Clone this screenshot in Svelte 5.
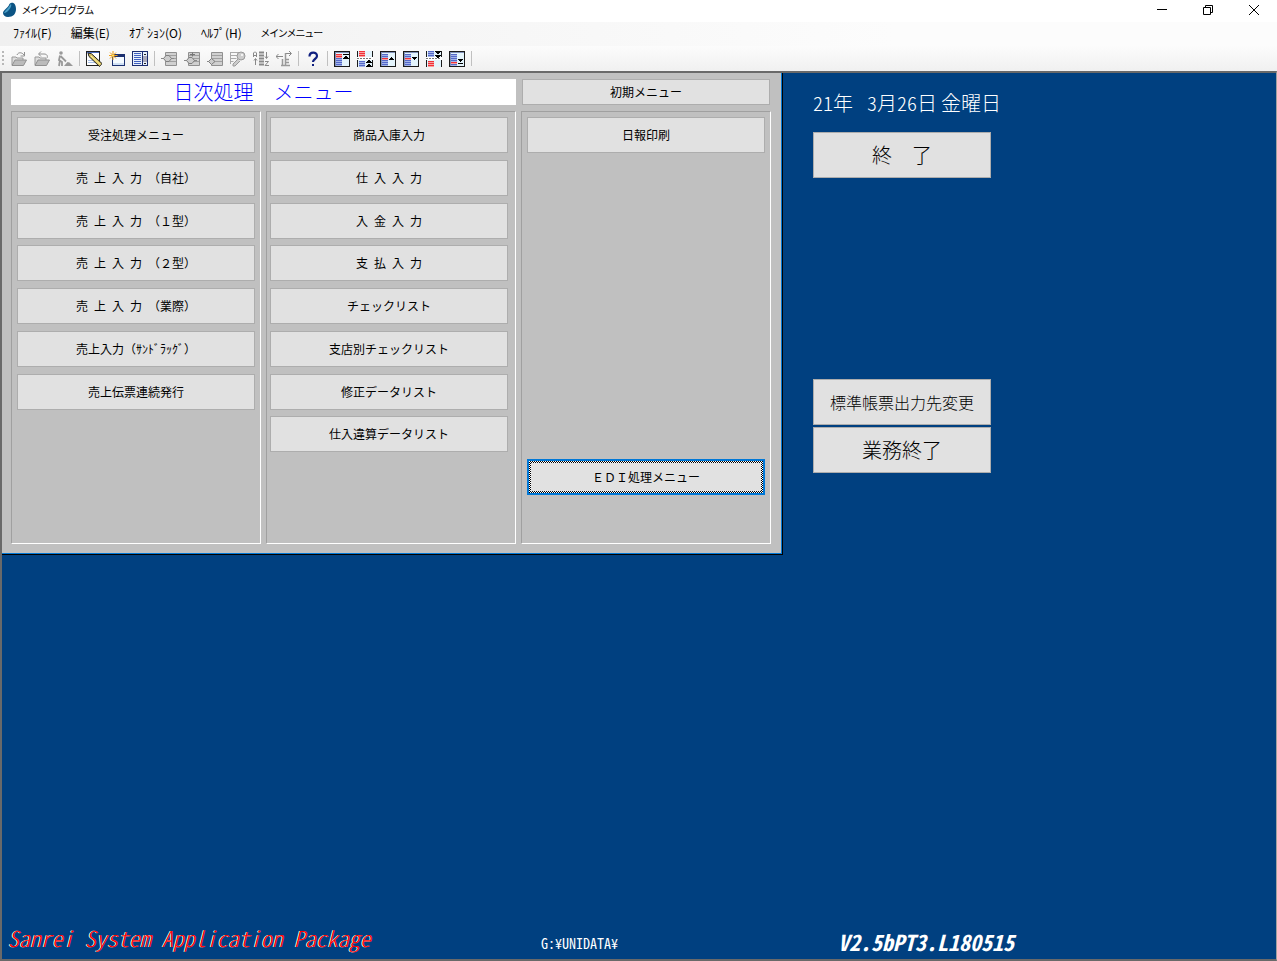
<script>
    const menus = ['ﾌｧｲﾙ(F)', '編集(E)', 'ｵﾌﾟｼｮﾝ(O)', 'ﾍﾙﾌﾟ(H)', 'メインメニュー'];

    const toolGroups = [
        ['open', 'revert', 'dig'],
        ['edit', 'new', 'list'],
        ['first', 'second', 'third', 'key', 'sort', 'range'],
        ['help'],
        ['pageTop', 'pagePrev', 'rowUp', 'rowDown', 'pageNext', 'pageEnd']
    ];

    // null keeps the row empty, \u2002 is a half-width space
    const columns = [
        [
            '受注処理メニュー',
            '売\u2002上\u2002入\u2002力\u2002（自社）',
            '売\u2002上\u2002入\u2002力\u2002（１型）',
            '売\u2002上\u2002入\u2002力\u2002（２型）',
            '売\u2002上\u2002入\u2002力\u2002（業際）',
            '売上入力（ｻﾝﾄﾞﾗｯｸﾞ）',
            '売上伝票連続発行'
        ],
        [
            '商品入庫入力',
            '仕\u2002入\u2002入\u2002力',
            '入\u2002金\u2002入\u2002力',
            '支\u2002払\u2002入\u2002力',
            'チェックリスト',
            '支店別チェックリスト',
            '修正データリスト',
            '仕入違算データリスト'
        ],
        ['日報印刷', null, null, null, null, null, null, null, 'ＥＤＩ処理メニュー']
    ];

    let selected = $state('ＥＤＩ処理メニュー');
</script>

{#snippet lines(red, ys)}
    {#each ys as y}
        <path d="M2 {y}h6v1h-6z" fill={red.includes(y) ? '#f03038' : '#5468c8'} />
        <path d="M2 {y + 1}h6v1h-6z" fill={red.includes(y) ? '#f8a0a0' : '#a4b4e8'} />
    {/each}
{/snippet}

{#snippet frame()}
    <path d="M0 0h16v16H0z" fill="#1a1a1a" />
    <path d="M1 1h14v14H1z" fill="#e4f4fc" />
    <path d="M1 1h14v1H1zM1 1h1v14H1z" fill="#8090b8" />
{/snippet}

{#snippet split()}
    <path d="M0 0h16v16H0z" fill="#e4f4fc" />
    <path d="M0 0h1v6H0zM15 0h1v6h-1zM0 9h1v7H0zM15 9h1v7h-1z" fill="#1a1a1a" />
    <path d="M0 6h16v3H0z" fill="#fff" />
    <path d="M0 7h2v1H0zM3 7h2v1H3zM6 7h2v1H6zM9 7h2v1H9zM12 7h2v1h-2z" fill="#777" />
{/snippet}

{#snippet icon(name)}
    <svg width="16" height="16" viewBox="0 0 16 16" aria-hidden="true">
        {#if name === 'open' || name === 'revert'}
            <path d="M1 14V6h4l1 1h6v2" fill="#ddd" stroke="#999" />
            <path d="M1 14.5 4 9h11.5l-3 5.5z" fill="#bbb" stroke="#909090" />
            {#if name === 'open'}
                <path d="M6 4c1-3 5-3 7 0M13.500 1v4h-4" fill="none" stroke="#909090" />
            {:else}
                <path d="M5 3h5c3 0 4 2 3 4M7 .5 4.500 3 7 5.500" fill="none" stroke="#909090" />
            {/if}
        {:else if name === 'dig'}
            <circle cx="4" cy="2" r="1.800" fill="#999" />
            <path d="M3 4.500 2 9l3 2v4M3 9l-1 6M3.500 5 9 10.500" fill="none" stroke="#999" stroke-width="1.800" />
            <path d="m7 15 3.500-4 2 .5L16 15z" fill="#999" />
        {:else if name === 'edit'}
            <path d="M0 0h14v15H0z" fill="#222" />
            <path d="M1 1h12v13H1z" fill="#fff" />
            <path d="M1 1h12v1H1z" fill="#5070c0" />
            <path d="M2 11h7v1H2zM2 9h5v1H2z" fill="#a8c0e8" />
            <path d="m2 2 3.500.8L16 12.500 13.500 15.500 3 5.500z" fill="#d8c060" stroke="#222" />
            <path d="m5 5 9.500 8.700" stroke="#fff5a0" fill="none" />
        {:else if name === 'new'}
            <path d="M3 3h13v12H3z" fill="#1c3070" />
            <path d="M4 6h11v8H4z" fill="#f4faff" />
            <path d="M4 12h11v2H4z" fill="#cfe0f4" />
            <path d="M4 0v9M0 4.500h8.500M1 1.500l6 6M7 1.500l-6 6" stroke="#f0a018" fill="none" />
            <path d="M3 3.500h2v2H3z" fill="#ffe060" />
        {:else if name === 'list'}
            <path d="M0 0h16v15H0z" fill="#1c2c70" />
            <path d="M1 1h9v13H1zM11 1h4v13h-4z" fill="#e8f0fc" />
            <path d="M2 2h7v1H2zM2 4h7v1H2zM2 6h7v1H2zM2 8h7v1H2zM2 10h7v1H2zM2 12h7v1H2z" fill="#4060c0" />
            <path d="M11 5h4v6h-4z" fill="#aab" />
            <path d="M12 3h2v1h-2zM12 12h2v1h-2z" fill="#222" />
        {:else if name === 'first' || name === 'second' || name === 'third'}
            <path d="M4.500 1.500h11v13h-11z" fill="#d0d0d0" stroke="#909090" />
            <path d="M5 4.500h10M5 7.500h10M5 10.500h10" stroke="#a0a0a0" fill="none" />
            {#if name === 'first'}
                <path d="M0 7.500h13" stroke="#888" fill="none" />
                <path d="M2.500 7.500 5 4.500h3l2.500 3-2.500 3H5z" fill="#ccc" stroke="#808080" />
            {:else if name === 'second'}
                <path d="M6 3.500h5M8.500 1.500v4" stroke="#777" fill="none" />
                <path d="M0 9.500h13" stroke="#888" fill="none" />
                <path d="M2.500 9.500 5 6.500h3l2.500 3-2.500 3H5z" fill="#ccc" stroke="#808080" />
            {:else}
                <path d="M0 10.500h8" stroke="#888" fill="none" />
                <path d="m1.500 10.500 3-3 3.500 3-3.500 3z" fill="#ccc" stroke="#808080" />
            {/if}
        {:else if name === 'key'}
            <path d="M.5 1.500h9M.5 4.500h7M.5 7.500h6M.5 10.500h3M.5 1v12" stroke="#aaa" fill="none" />
            <circle cx="11" cy="5" r="4" fill="#ccc" stroke="#999" />
            <circle cx="12" cy="4" r="1" fill="#fff" />
            <path d="m8 8-5 5v2h2l5-5" fill="#ccc" stroke="#999" />
        {:else if name === 'sort'}
            <path d="M.5 6V2l1-1h1l1 1v4M.5 4.500h3" stroke="#888" fill="none" />
            <path d="M6 1.500h5M6 4.500h5M6 7.500h5M6 10.500h5M6 13.500h5" stroke="#888" stroke-width="2" fill="none" />
            <path d="M13.500 1v6M12 5.500l1.500 2 1.500-2M12 10.500h3.500l-3.500 4h4M2.500 14V8M1 9.500l1.500-2L4 9.500" stroke="#888" fill="none" />
        {:else if name === 'range'}
            <path d="M0 5.500h7M2.500 3 0 5.500 2.500 8M9 2.500h6M13 0l2.500 2.500L13 5" stroke="#888" fill="none" />
            <path d="M9.500 2v12M5 14.500h9M6.500 8v6M9 8.500h4M9 11.500h4" stroke="#999" fill="none" stroke-width="1.500" />
        {:else if name === 'help'}
            <path d="M4.500 5.500C4.500.500 12 .500 12 5c0 3-4 3-4 6" stroke="#102080" stroke-width="2.200" fill="none" />
            <path d="M7 13h2v2H7z" fill="#102080" />
        {:else if name === 'pageTop'}
            {@render frame()}
            {@render lines([3, 5], [3, 5, 7, 9, 11, 13])}
            <path d="M9 3h6v1H9zM11 5h2v1h-2zM10 6h4v1h-4zM9 7h6v1H9z" />
        {:else if name === 'pagePrev'}
            {@render split()}
            {@render lines([0, 2, 4], [0, 2, 4, 10, 12, 14])}
            <path d="M11 9h2v1h-2zM10 10h4v1h-4zM9 11h6v1H9zM11 13h2v1h-2zM10 14h4v1h-4zM9 15h6v1H9z" />
        {:else if name === 'rowUp'}
            {@render frame()}
            {@render lines([7], [3, 5, 7, 9, 11, 13])}
            <path d="M11 6h1v1h-1zM10 7h3v1h-3zM9 8h5v1H9z" />
        {:else if name === 'rowDown'}
            {@render frame()}
            {@render lines([7], [3, 5, 7, 9, 11, 13])}
            <path d="M9 6h5v1H9zM10 7h3v1h-3zM11 8h1v1h-1z" />
        {:else if name === 'pageNext'}
            {@render split()}
            {@render lines([10, 12, 14], [0, 2, 4, 10, 12, 14])}
            <path d="M9 0h6v1H9zM10 1h4v1h-4zM11 2h2v1h-2zM9 4h6v1H9zM10 5h4v1h-4zM11 6h2v1h-2z" />
        {:else}
            {@render frame()}
            {@render lines([11], [3, 5, 7, 9, 11, 13])}
            <path d="M9 8h5v1H9zM10 9h3v1h-3zM11 10h1v1h-1zM9 12h5v1H9z" />
        {/if}
    </svg>
{/snippet}

<div class="window">
    <header class="titlebar">
        <svg width="16" height="16" viewBox="0 0 16 16" aria-hidden="true">
            <path d="M9 1c3-1 5 2 5 6 0 5-3 8-8 8-3 0-5-2-5-4 0-3 5-5 6-8 .3-1 1-1.700 2-2z" fill="#0c5484" />
            <path d="M9 2c1 2-1 5-3 7-1.500 1.500-3 2-4 2 1-3 5-5 6-8z" fill="#4aa0c8" />
        </svg>
        <h1>メインプログラム</h1>
        <div class="window-controls">
            <button aria-label="最小化">
                <svg width="12" height="12" viewBox="0 0 12 12"><path d="M1 5.500h10" /></svg>
            </button>
            <button aria-label="元に戻す">
                <svg width="12" height="12" viewBox="0 0 12 12"><path d="M1.500 3.500h7v7h-7zM3.500 3V1.500h7v7H9" /></svg>
            </button>
            <button aria-label="閉じる">
                <svg width="12" height="12" viewBox="0 0 12 12"><path d="m1 1 10 10M11 1 1 11" /></svg>
            </button>
        </div>
    </header>

    <nav class="menubar">
        {#each menus as menu}
            <button>{menu}</button>
        {/each}
    </nav>

    <div class="toolbar">
        <span class="grip"></span>
        {#each toolGroups as group}
            <div class="tool-group">
                {#each group as name}
                    <button aria-label={name}>{@render icon(name)}</button>
                {/each}
            </div>
        {/each}
    </div>

    <main class="stage">
        <div class="top">
            <section class="panel">
                <h2 class="panel-title">日次処理　メニュー</h2>
                <button class="btn initial">初期メニュー</button>
                {#each columns as items}
                    <div class="column">
                        {#each items as item}
                            {#if item}
                                <button class="btn" class:focused={item === selected} onclick={() => (selected = item)}>{item}</button>
                            {:else}
                                <span></span>
                            {/if}
                        {/each}
                    </div>
                {/each}
            </section>

            <aside class="side">
                <p class="date">
                    <span>21年</span>
                    <span>{' 3月26日'}</span>
                    <span>金曜日</span>
                </p>
                <button class="btn large">終　了</button>
                <div class="side-bottom">
                    <button class="btn medium">標準帳票出力先変更</button>
                    <button class="btn large">業務終了</button>
                </div>
            </aside>
        </div>

        <footer class="footer">
            <span class="product">Sanrei System Application Package</span>
            <span class="path">G:¥UNIDATA¥</span>
            <span class="version">V2.5bPT3.L180515</span>
        </footer>
    </main>
</div>

<style>
    :global(body) {
        margin: 0;
    }

    * {
        box-sizing: border-box;
    }

    h1, h2, p {
        margin: 0;
        font-weight: 400;
    }

    button {
        font: inherit;
        color: inherit;
        padding: 0;
        border: none;
        background: none;
    }

    svg {
        display: block;
    }

    .window {
        display: flex;
        flex-direction: column;
        min-height: 100vh;
        font-family: "Noto Sans CJK JP", sans-serif;
        font-size: 12px;
        line-height: 16px;
        color: #000;
        background: #fff;
    }

    .titlebar {
        display: flex;
        align-items: center;
        height: 22px;
        padding: 0 0 2px 2px;
        gap: 4px;
    }

    .titlebar h1 {
        font-size: 10px;
        font-feature-settings: "palt";
    }

    .window-controls {
        display: flex;
        margin-left: auto;
    }

    .window-controls button {
        display: flex;
        justify-content: center;
        align-items: center;
        width: 46px;
        height: 18px;
    }

    .window-controls path {
        fill: none;
        stroke: #000;
    }

    .menubar {
        display: flex;
        align-items: center;
        height: 24px;
        padding: 0 0 2px 13px;
        gap: 19px;
        background: linear-gradient(to right, #f0f0f0, #fcfcfc 70%);
        font-feature-settings: "palt";
    }

    .menubar button:last-child {
        font-size: 10px;
    }

    .toolbar {
        display: flex;
        align-items: center;
        height: 25px;
        padding-left: 2px;
        background: linear-gradient(#fcfcfc, #f0f0f0);
    }

    .grip {
        width: 2px;
        height: 15px;
        margin-right: 3px;
        background: repeating-linear-gradient(#b8b8b8 0 2px, transparent 2px 4px);
    }

    .tool-group {
        display: flex;
        align-items: center;
        height: 15px;
        margin-right: 2px;
        padding-right: 3px;
        border-right: 1px solid #c0c0c0;
    }

    .tool-group button {
        display: flex;
        justify-content: center;
        width: 23px;
    }

    .stage {
        display: flex;
        flex-direction: column;
        flex: 1;
        border: 2px solid #696969;
        border-right: 1px solid #a0a0a0;
        background: #004080;
    }

    .top {
        display: grid;
        grid-template-columns: minmax(0, 613fr) minmax(0, 387fr);
    }

    .panel {
        display: grid;
        grid-template-columns: repeat(3, 1fr);
        grid-template-rows: 26px 1fr;
        gap: 6px 5px;
        padding: 6px 11px 10px 9px;
        border-right: 1px solid #000;
        border-bottom: 1px solid #000;
        background: #c0c0c0;
        box-shadow: inset -1px -1px #0078d7;
    }

    .panel-title {
        grid-column: span 2;
        background: #fff;
        color: #0000ff;
        font-size: 20px;
        font-weight: 300;
        line-height: 26px;
        text-align: center;
    }

    .column {
        display: grid;
        grid-template-rows: repeat(9, 36px);
        align-content: space-between;
        min-height: 433px;
        padding: 5px 5px 48px;
        border: 1px solid #a0a0a0;
        border-right-color: #fff;
        border-bottom-color: #fff;
    }

    .column:nth-of-type(2) {
        padding-left: 3px;
        padding-right: 7px;
    }

    .btn {
        border: 1px solid #adadad;
        background: #e1e1e1;
        white-space: pre;
    }

    .initial {
        margin: 0 1px;
    }

    .focused {
        border: 2px solid #0078d7;
        padding: 2px;
        background: linear-gradient(#e1e1e1, #e1e1e1) content-box, repeating-conic-gradient(#000 0 25%, #fff 0 50%) 0 0 / 2px 2px;
        outline: none;
    }

    .side {
        display: flex;
        flex-direction: column;
        width: 210px;
        padding: 18px 0 82px 30px;
    }

    .side .btn {
        width: 178px;
        height: 46px;
    }

    .date {
        display: flex;
        gap: 4px;
        margin-bottom: 17px;
        color: #fff;
        font-size: 20px;
        font-weight: 300;
        font-feature-settings: "hwid";
        line-height: 24px;
        white-space: pre;
    }

    .large {
        font-size: 20px;
        font-weight: 300;
    }

    .medium {
        font-size: 16px;
        font-weight: 300;
    }

    .side-bottom {
        display: flex;
        flex-direction: column;
        gap: 2px;
        margin-top: auto;
    }

    .footer {
        display: grid;
        grid-template-columns: 539fr 297fr 438fr;
        align-items: end;
        margin-top: auto;
        padding-bottom: 8px;
        color: #fff;
        font-feature-settings: "hwid";
    }

    .product {
        padding-left: 6px;
        padding-bottom: 2px;
        color: #f00;
        font-size: 22px;
        font-style: italic;
        font-weight: 300;
        line-height: 24px;
        text-shadow: -1px 0 #fff;
    }

    .path {
        font-size: 14px;
    }

    .version {
        font-size: 22px;
        font-style: italic;
        font-weight: 700;
        line-height: 20px;
    }
</style>
